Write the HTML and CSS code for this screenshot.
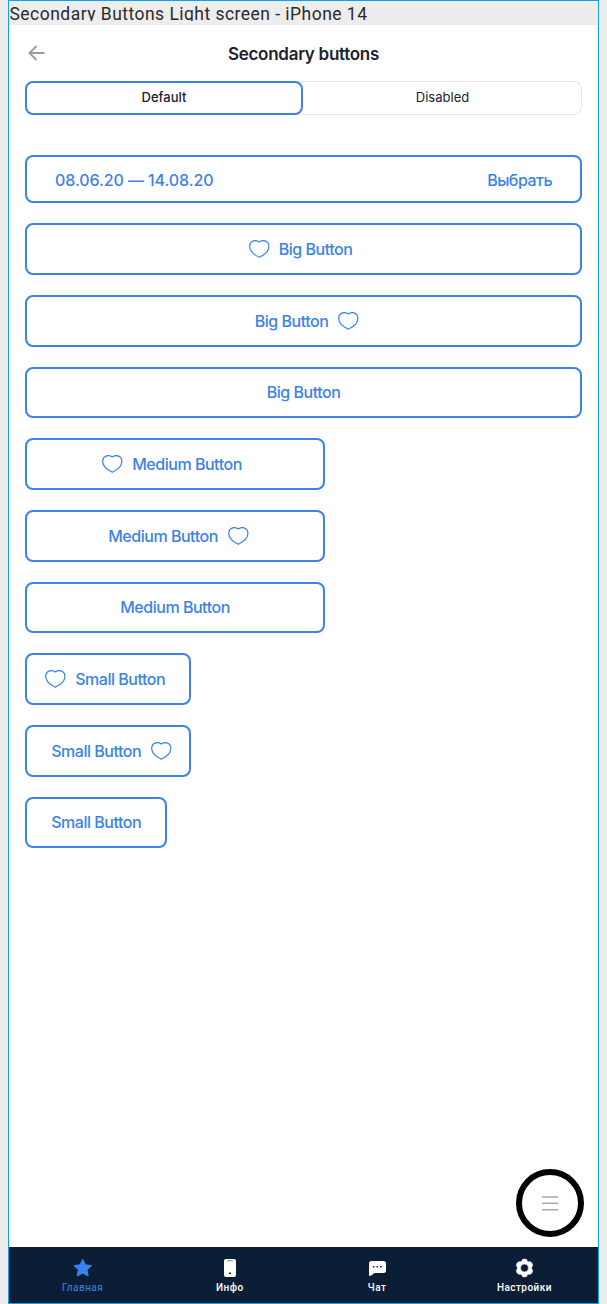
FILE: index.html
```html
<!DOCTYPE html>
<html lang="ru">
<head>
<meta charset="utf-8">
<title>Secondary buttons</title>
<link rel="stylesheet" href="styles.css">
</head>
<body>
<svg class="sprite" width="0" height="0">
  <symbol id="heart" viewBox="0 0 21 18">
    <path d="M10.300 2C8.600.7 6 .2 3.900 1.100 1.700 2.100.6 4.200.7 6.800c.2 4.500 4.800 8.200 9.600 10.500 4.800-2.300 9.400-6 9.600-10.500.1-2.600-1-4.700-3.200-5.700C14.600.2 12 .7 10.300 2z" fill="none" stroke="currentColor" stroke-width="1.200" stroke-linejoin="round"/>
  </symbol>
</svg>
<div class="frame">
  <div class="caption"><span class="caption-text">Secondary Buttons Light screen - iPhone 14</span></div>
  <main class="screen">
    <header class="header">
      <svg class="back" width="18" height="16" viewBox="0 0 18 16"><path d="M16.500 8H2M8.500 1L1.500 8l7 7" fill="none" stroke="#9a9baa" stroke-width="1.900"/></svg>
      <h1 class="title">Secondary buttons</h1>
    </header>
    <div class="tabs">
      <div class="tab tab-active">Default</div>
      <div class="tab">Disabled</div>
    </div>
    <div class="list">
      <div class="btn range"><span class="dates">08.06.20 — 14.08.20</span><span class="choose">Выбрать</span></div>
      <div class="btn icon-left"><svg class="heart"><use href="#heart"/></svg><span class="label">Big Button</span></div>
      <div class="btn icon-right"><span class="label">Big Button</span><svg class="heart"><use href="#heart"/></svg></div>
      <div class="btn plain"><span class="label">Big Button</span></div>
      <div class="btn medium icon-left"><svg class="heart"><use href="#heart"/></svg><span class="label">Medium Button</span></div>
      <div class="btn medium icon-right"><span class="label">Medium Button</span><svg class="heart"><use href="#heart"/></svg></div>
      <div class="btn medium plain"><span class="label">Medium Button</span></div>
      <div class="btn small icon-left"><svg class="heart"><use href="#heart"/></svg><span class="label">Small Button</span></div>
      <div class="btn small icon-right"><span class="label">Small Button</span><svg class="heart"><use href="#heart"/></svg></div>
      <div class="btn small-plain plain"><span class="label">Small Button</span></div>
    </div>
    <div class="fab"><svg width="16" height="15" viewBox="0 0 16 15"><path d="M0 1h16M0 7.300h16M0 13.700h16" stroke="#a6a9b8" stroke-width="1.500"/></svg></div>
  </main>
  <nav class="nav">
    <div class="item current">
      <svg width="20" height="20" viewBox="0 0 20 20"><path d="M9.700 1.300l2.600 5.500 6.200.8-4.500 4.200 1.200 6.200-5.500-2.900-5.500 2.900 1.200-6.200L.9 7.600l6.200-.8z" fill="currentColor" stroke="currentColor" stroke-width="1" stroke-linejoin="round"/></svg>
      <span>Главная</span>
    </div>
    <div class="item">
      <svg width="20" height="20" viewBox="0 0 20 20"><rect x="4" y="1" width="12" height="18" rx="2" fill="#fff"/><path d="M7.200 2.700h5.600" stroke="#9298a5" stroke-width="1.200"/><rect x="9" y="14.500" width="2" height="1.500" fill="#0c1e36"/></svg>
      <span>Инфо</span>
    </div>
    <div class="item">
      <svg width="20" height="20" viewBox="0 0 20 20"><path d="M4.500 3h12Q19 3 19 5.500v7q0 2.500-2.500 2.500H7.500L3.500 18q-1.500.5-1.500-1.500v-11Q2 3 4.500 3z" fill="#fff"/><path d="M6 8.800h1.500M9.600 8.800h1.500M13.100 8.800h1.500" stroke="#0c1e36" stroke-width="1.500"/></svg>
      <span>Чат</span>
    </div>
    <div class="item">
      <svg width="20" height="20" viewBox="0 0 20 20"><path fill-rule="evenodd" d="M8.500 1.500Q10.500.7 12.500 1.500L13.700 3.800 16.500 3.800Q18.300 5 18.700 7.300L17.300 10l1.400 2.700Q18.300 15 16.500 16.200L13.700 16.200 12.500 18.500Q10.500 19.300 8.500 18.500L7.300 16.200 4.500 16.200Q2.700 15 2.300 12.700L3.700 10 2.300 7.300Q2.700 5 4.500 3.800L7.300 3.800zM10.500 6a4 4 0 1 0 0 8 4 4 0 0 0 0-8z" fill="#fff" stroke="#fff" stroke-width=".6" stroke-linejoin="round"/></svg>
      <span>Настройки</span>
    </div>
  </nav>
</div>
</body>
</html>
```
FILE: styles.css
```css
* { box-sizing: border-box; }
body {
  margin: 0;
  background: #ededed;
  font-family: Inter, "Noto Sans", sans-serif;
}
.sprite { display: block; height: 0; }
.frame {
  display: flex;
  flex-direction: column;
  width: 591px;
  height: 1304px;
  margin-left: 8px;
  border: 1px solid #0aa5ee;
}
.caption { height: 24px; }
.caption-text {
  display: block;
  height: 20px;
  overflow: hidden;
  white-space: nowrap;
  padding-left: 0.5px;
  font: 17.5px/26px Roboto, sans-serif;
  letter-spacing: 0.47px;
  color: #2b2b2b;
}
.screen {
  flex: 1;
  display: flex;
  flex-direction: column;
  padding: 0 16px;
  background: #fff;
}
.header {
  display: grid;
  grid-template-columns: 24px 1fr 24px;
  align-items: center;
  height: 56px;
}
.back { margin-left: 3px; }
.title {
  margin: 2px 0 0;
  text-align: center;
  font-size: 17px;
  font-weight: 600;
  letter-spacing: -0.28px;
  color: #20222f;
}
.tabs {
  display: grid;
  grid-template-columns: 278px 1fr;
  height: 34px;
  border-radius: 8px;
  box-shadow: inset 0 0 0 1px #e4e5ed;
}
.tab {
  display: flex;
  align-items: center;
  justify-content: center;
  padding-bottom: 2px;
  font-size: 13px;
  font-weight: 400;
  color: #20222f;
}
.tab-active {
  border: 2px solid #3b82ed;
  border-radius: 8px;
  font-weight: 500;
}
.list {
  display: flex;
  flex-direction: column;
  align-items: flex-start;
  gap: 20px;
  margin-top: 40px;
}
.btn {
  display: flex;
  align-items: center;
  justify-content: center;
  gap: 10px;
  width: 100%;
  height: 52px;
  border: 2px solid #3b82ed;
  border-radius: 8px;
  color: #3b82ed;
  font-size: 16px;
  font-weight: 500;
  line-height: 20px;
  white-space: nowrap;
}
.range {
  height: 48px;
  padding: 2px 28px 0;
  justify-content: space-between;
}
.icon-left { padding: 0 24px 0 18px; }
.icon-right { padding: 0 18px 0 24px; }
.plain {
  height: 51px;
  padding-bottom: 1px;
}
.medium { width: 300px; }
.small { width: 166.4px; }
.small-plain { width: 142.4px; }
.heart {
  flex: none;
  width: 21px;
  height: 18px;
  margin-right: -1px;
  margin-bottom: 1px;
}
.label { letter-spacing: -0.47px; }
.dates { letter-spacing: -0.08px; }
.choose { letter-spacing: -0.5px; }
.fab {
  display: flex;
  align-items: center;
  justify-content: center;
  align-self: flex-end;
  width: 68px;
  height: 68px;
  margin: auto -2px 10px 0;
  border: 6px solid #000;
  border-radius: 50%;
}
.nav {
  display: grid;
  grid-template-columns: repeat(4, 1fr);
  height: 56px;
  background: #0c1e36;
  color: #fff;
}
.item {
  display: flex;
  flex-direction: column;
  align-items: center;
  gap: 3px;
  padding-top: 11px;
  font: 500 10px/13px Roboto, sans-serif;
  letter-spacing: 0.45px;
}
.current {
  font-weight: 400;
  color: #3b82ed;
}
```
